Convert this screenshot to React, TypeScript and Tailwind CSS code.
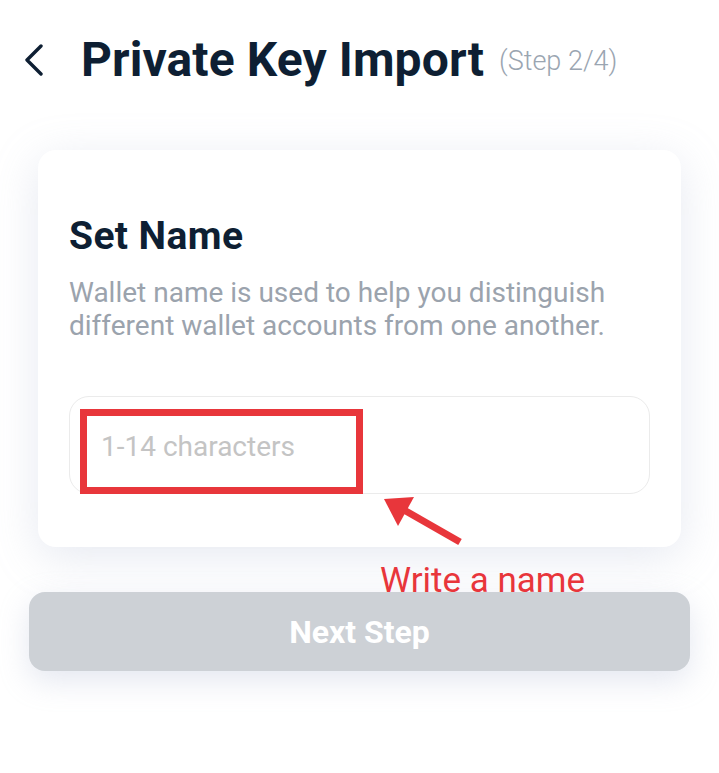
import React from "react";

export default function App() {
  return (
    <div
      className="relative w-[719px] h-[773px] bg-white overflow-hidden"
      style={{ fontFamily: "Roboto, 'Noto Sans', Arial, sans-serif" }}
    >
      {/* Header */}
      <div className="flex items-center h-[60px] mt-[30px] pl-[24px]">
        <svg width="20" height="32" viewBox="0 0 20 32" className="shrink-0">
          <path d="M17 2 L3 16 L17 30" fill="none" stroke="#0e1f33" strokeWidth="3.4" strokeLinecap="round" strokeLinejoin="round" />
        </svg>
        <h1 className="ml-[37px] text-[48px] leading-none font-bold text-[#0e1f33] tracking-[0.1px]">
          Private Key Import
        </h1>
        <span className="ml-[15px] mt-[2px] text-[27px] leading-none font-light text-[#9aa5b1]">
          (Step 2/4)
        </span>
      </div>

      {/* Content */}
      <div className="px-[29px] mt-[60px] flex flex-col">
        <div className="mx-[9px] bg-white rounded-[18px] shadow-[0_10px_45px_rgba(165,175,205,0.28)] pt-[67px] pb-[53px] px-[31px]">
          <h2 className="text-[39px] leading-none font-bold text-[#0e1f33] tracking-[0.4px]">Set Name</h2>
          <p className="mt-[20px] text-[28px] leading-[33px] text-[#9ba3ad]">
            Wallet name is used to help you distinguish different wallet accounts from one another.
          </p>
          <div className="mt-[54px] h-[98px] rounded-[20px] border-[1.5px] border-[#ebebeb] flex items-center pl-[31px] pt-[3px]">
            <span className="text-[28px] leading-none text-[#c4c4c4]">1-14 characters</span>
          </div>
        </div>

        <div className="mt-[45px] h-[79px] rounded-[16px] bg-[#cdd1d6] shadow-[0_10px_30px_rgba(165,175,205,0.3)] flex items-center justify-center">
          <span className="text-[32px] leading-none font-bold text-white">Next Step</span>
        </div>
      </div>

      {/* Annotations */}
      <div className="absolute left-[80px] top-[409px] w-[283px] h-[85px] border-[7px] border-[#e8363b]" />
      <svg className="absolute inset-0 pointer-events-none" width="719" height="773" viewBox="0 0 719 773">
        <polygon points="384,499 414,497 398,526" fill="#e8363b" />
        <line x1="404" y1="510" x2="460" y2="542" stroke="#e8363b" strokeWidth="7" />
      </svg>
      <span className="absolute left-[380px] top-[563px] z-10 text-[35px] leading-none text-[#e8363b]">
        Write a name
      </span>
    </div>
  );
}
